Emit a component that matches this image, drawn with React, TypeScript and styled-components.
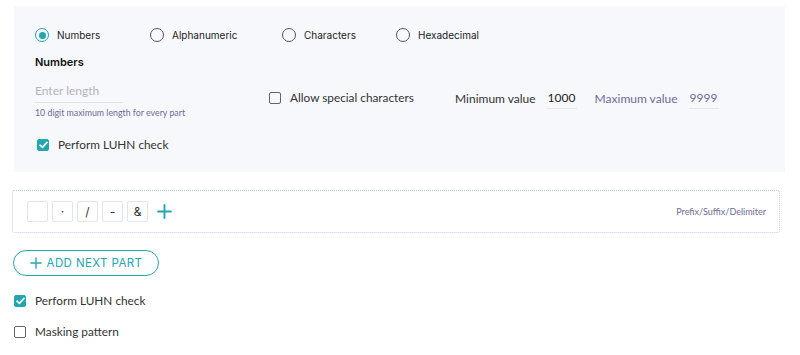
import React from "react";
import styled, { createGlobalStyle } from "styled-components";

const TEAL = "#22a6b0";

const Global = createGlobalStyle`
  html, body { margin: 0; padding: 0; background: #ffffff; }
  body { font-family: "Lato", "Open Sans", sans-serif; color: #333; }
`;

const Page = styled.div`
  width: 800px;
  height: 355px;
  padding: 6px 0 0 12px;
  box-sizing: border-box;
`;

const Panel = styled.section`
  margin-left: 2px;
  width: 771px;
  height: 166px;
  box-sizing: border-box;
  background: #f7f8fc;
  padding: 22px 20px 0 21px;
`;

const RadioRow = styled.div`
  display: flex;
  align-items: center;
  height: 14px;
`;

const RadioOption = styled.label<{ $w?: number }>`
  display: flex;
  align-items: center;
  gap: 8px;
  width: ${(p) => (p.$w ? `${p.$w}px` : "auto")};
  font-family: "Inter", sans-serif;
  font-size: 10px;
  color: #222;
`;

const RadioCircle = styled.span<{ $on?: boolean }>`
  width: 14px;
  height: 14px;
  border-radius: 50%;
  box-sizing: border-box;
  border: 1.5px solid ${(p) => (p.$on ? TEAL : "#555")};
  display: flex;
  align-items: center;
  justify-content: center;
  flex: none;
  &::after {
    content: "";
    width: 7px;
    height: 7px;
    border-radius: 50%;
    background: ${(p) => (p.$on ? TEAL : "transparent")};
  }
`;

const Heading = styled.div`
  margin-top: 13px;
  font-family: "Inter", sans-serif;
  font-weight: 600;
  font-size: 11px;
  color: #111;
  line-height: 14px;
`;

const DetailRow = styled.div`
  display: flex;
  align-items: flex-start;
  margin-top: 12px;
`;

const LengthCol = styled.div`
  width: 234px;
  display: flex;
  flex-direction: column;
`;

const LengthInput = styled.div`
  width: 88px;
  height: 21px;
  margin-left: -1px;
  padding-left: 1px;
  border-bottom: 1px solid #e4e5ea;
  font-size: 12px;
  color: #b4b4bc;
  line-height: 20px;
`;

const Helper = styled.div`
  margin-top: 4px;
  font-size: 8.8px;
  color: #6e6b98;
  line-height: 12px;
`;

const CheckLabel = styled.label<{ $w?: number }>`
  display: flex;
  align-items: center;
  gap: 9px;
  width: ${(p) => (p.$w ? `${p.$w}px` : "auto")};
  font-size: 11.8px;
  color: #333;
  line-height: 16px;
`;

const Box = styled.span<{ $on?: boolean }>`
  width: 12px;
  height: 12px;
  box-sizing: border-box;
  border-radius: 2px;
  flex: none;
  border: 1.5px solid ${(p) => (p.$on ? TEAL : "#666")};
  background: ${(p) => (p.$on ? TEAL : "transparent")};
  display: flex;
  align-items: center;
  justify-content: center;
`;

const SpecialWrap = styled.div`
  padding-top: 9px;
`;

const ValueGroup = styled.div`
  display: flex;
  align-items: center;
  padding-top: 7px;
`;

const ValueLabel = styled.span<{ $muted?: boolean }>`
  font-size: 12px;
  color: ${(p) => (p.$muted ? "#6e6b98" : "#333")};
  margin-right: 11px;
`;

const ValueInput = styled.span<{ $muted?: boolean; $gap?: number }>`
  display: inline-block;
  width: 29px;
  padding: 2px 0 3px 1px;
  border-bottom: 1px solid #e4e5ea;
  font-size: 12px;
  color: ${(p) => (p.$muted ? "#6e6b98" : "#222")};
  margin-right: ${(p) => p.$gap ?? 0}px;
`;

const LuhnWrap = styled.div`
  margin-top: 18px;
  margin-left: 2px;
`;

const DelimBox = styled.div`
  margin-top: 18px;
  width: 768px;
  height: 43px;
  box-sizing: border-box;
  border: 1px dotted #c3cbe0;
  border-radius: 2px;
  display: flex;
  align-items: center;
  padding: 0 13px 0 14px;
`;

const Chips = styled.div`
  display: flex;
  align-items: center;
  gap: 4px;
  flex: 1;
`;

const Chip = styled.span`
  width: 21px;
  height: 21px;
  box-sizing: border-box;
  border: 1px solid #dfe4f0;
  border-radius: 2px;
  background: #fff;
  display: flex;
  align-items: center;
  justify-content: center;
  font-family: "Inter", sans-serif;
  font-size: 12px;
  color: #333;
`;

const PlusBtn = styled.span`
  margin-left: 5px;
  display: flex;
  color: ${TEAL};
`;

const DelimHint = styled.span`
  font-size: 9px;
  color: #6e6b98;
`;

const AddButton = styled.button`
  margin-top: 17px;
  margin-left: 1px;
  width: 146px;
  height: 26px;
  box-sizing: border-box;
  border: 1.3px solid ${TEAL};
  border-radius: 13px;
  background: #fff;
  color: ${TEAL};
  font-family: "Inter", sans-serif;
  font-size: 11.5px;
  font-weight: 400;
  letter-spacing: 0.4px;
  display: flex;
  align-items: center;
  justify-content: center;
  gap: 5px;
  padding: 0;
`;

const BottomChecks = styled.div`
  margin-top: 17px;
  margin-left: 2px;
  display: flex;
  flex-direction: column;
  gap: 15px;
`;

const Check = () => (
  <svg width="9" height="8" viewBox="0 0 9 8">
    <path d="M1 4.2 L3.4 6.4 L8 1.4" fill="none" stroke="#fff" strokeWidth="1.6" strokeLinecap="round" strokeLinejoin="round" />
  </svg>
);

const Plus = ({ size, w }: { size: number; w: number }) => (
  <svg width={size} height={size} viewBox="0 0 14 14">
    <path d="M7 1 V13 M1 7 H13" stroke="currentColor" strokeWidth={w} strokeLinecap="round" />
  </svg>
);

export default function App() {
  return (
    <>
      <Global />
      <Page>
        <Panel>
          <RadioRow>
            <RadioOption $w={115}><RadioCircle $on />Numbers</RadioOption>
            <RadioOption $w={132}><RadioCircle />Alphanumeric</RadioOption>
            <RadioOption $w={114}><RadioCircle />Characters</RadioOption>
            <RadioOption><RadioCircle />Hexadecimal</RadioOption>
          </RadioRow>
          <Heading>Numbers</Heading>
          <DetailRow>
            <LengthCol>
              <LengthInput>Enter length</LengthInput>
              <Helper>10 digit maximum length for every part</Helper>
            </LengthCol>
            <SpecialWrap>
              <CheckLabel $w={186}><Box />Allow special characters</CheckLabel>
            </SpecialWrap>
            <ValueGroup>
              <ValueLabel>Minimum value</ValueLabel>
              <ValueInput $gap={18}>1000</ValueInput>
              <ValueLabel $muted>Maximum value</ValueLabel>
              <ValueInput $muted>9999</ValueInput>
            </ValueGroup>
          </DetailRow>
          <LuhnWrap>
            <CheckLabel><Box $on><Check /></Box>Perform LUHN check</CheckLabel>
          </LuhnWrap>
        </Panel>
        <DelimBox>
          <Chips>
            <Chip />
            <Chip>·</Chip>
            <Chip>/</Chip>
            <Chip>-</Chip>
            <Chip>&amp;</Chip>
            <PlusBtn><Plus size={15} w={1.8} /></PlusBtn>
          </Chips>
          <DelimHint>Prefix/Suffix/Delimiter</DelimHint>
        </DelimBox>
        <AddButton><Plus size={12} w={1.6} />ADD NEXT PART</AddButton>
        <BottomChecks>
          <CheckLabel><Box $on><Check /></Box>Perform LUHN check</CheckLabel>
          <CheckLabel><Box />Masking pattern</CheckLabel>
        </BottomChecks>
      </Page>
    </>
  );
}
